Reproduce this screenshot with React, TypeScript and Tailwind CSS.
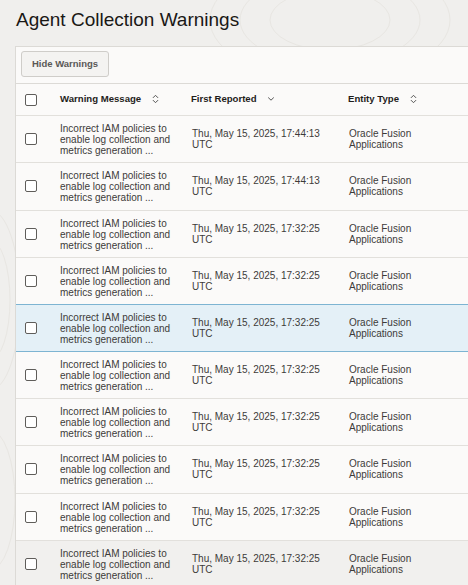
import React from "react";

const rows = [
  { date: "Thu, May 15, 2025, 17:44:13", state: "" },
  { date: "Thu, May 15, 2025, 17:44:13", state: "" },
  { date: "Thu, May 15, 2025, 17:32:25", state: "" },
  { date: "Thu, May 15, 2025, 17:32:25", state: "" },
  { date: "Thu, May 15, 2025, 17:32:25", state: "sel" },
  { date: "Thu, May 15, 2025, 17:32:25", state: "" },
  { date: "Thu, May 15, 2025, 17:32:25", state: "" },
  { date: "Thu, May 15, 2025, 17:32:25", state: "" },
  { date: "Thu, May 15, 2025, 17:32:25", state: "" },
  { date: "Thu, May 15, 2025, 17:32:25", state: "hover" },
];

function Box() {
  return <div className="w-[12px] h-[12px] rounded-[2px] border-[1.5px] border-[#5f5d5a] bg-white" />;
}

function SortBoth() {
  return (
    <svg width="7" height="10" viewBox="0 0 7 10" fill="none" stroke="#555" strokeWidth="1" strokeLinecap="round" strokeLinejoin="round">
      <path d="M1.2 3.6 L3.5 1.3 L5.8 3.6" />
      <path d="M1.2 6.4 L3.5 8.7 L5.8 6.4" />
    </svg>
  );
}

function SortDown() {
  return (
    <svg width="8" height="6" viewBox="0 0 8 6" fill="none" stroke="#555" strokeWidth="1" strokeLinecap="round" strokeLinejoin="round">
      <path d="M1.5 1.8 L4 4.2 L6.5 1.8" />
    </svg>
  );
}

export default function App() {
  return (
    <div
      className="relative w-[468px] h-[585px] overflow-hidden bg-[#f0efed] text-[#161513]"
      style={{ fontFamily: '"Liberation Sans", Arial, sans-serif' }}
    >
      <svg className="absolute inset-0" width="468" height="585" viewBox="0 0 468 585" fill="none" stroke="#e8e6e2" strokeWidth="1">
        <ellipse cx="330" cy="20" rx="60" ry="30" />
        <ellipse cx="330" cy="20" rx="90" ry="45" />
        <ellipse cx="330" cy="20" rx="120" ry="60" />
        <ellipse cx="-10" cy="300" rx="20" ry="60" />
        <ellipse cx="-10" cy="300" rx="30" ry="90" />
        <ellipse cx="-10" cy="500" rx="25" ry="70" />
      </svg>
      <div className="relative flex flex-col">
        <h1 className="pl-[16px] pt-[8px] h-[46px] text-[19px] leading-[24px] font-normal text-[#1a1816]">
          Agent Collection Warnings
        </h1>
        <div className="ml-[15px] w-[470px] border-l border-t border-[#dcdad6] bg-[#fbfaf9]">
          <div className="h-[37px] border-b border-[#dcdad6] flex items-start pt-[4px] pl-[5px]">
            <button className="h-[26px] px-[10px] rounded-[3px] border border-[#cfcdc9] bg-[#f4f3f1] text-[9.5px] font-bold text-[#5a5856]">
              Hide Warnings
            </button>
          </div>
          <div className="h-[32px] border-b border-[#e2e0dc] flex items-center text-[9.6px] font-bold text-[#1f1d1b]">
            <div className="w-[44px] pl-[9px] flex items-center"><Box /></div>
            <div className="w-[131px] flex items-center gap-[11px]">
              <span>Warning Message</span>
              <SortBoth />
            </div>
            <div className="w-[157px] flex items-center gap-[10px]">
              <span>First Reported</span>
              <SortDown />
            </div>
            <div className="flex items-center gap-[11px]">
              <span>Entity Type</span>
              <SortBoth />
            </div>
          </div>
          {rows.map((r, i) => (
            <div
              key={i}
              className={
                "h-[47.33px] flex items-center text-[10px] leading-[11px] text-[#3d3b39] border-b " +
                (r.state === "sel"
                  ? "bg-[#e4f0f7] border-[#7db4d2] border-t -mt-px"
                  : r.state === "hover"
                  ? "bg-[#f1f0ee] border-[#e2e0dc]"
                  : "border-[#e2e0dc]")
              }
            >
              <div className="w-[44px] pl-[9px] flex items-center"><Box /></div>
              <div className="w-[132px] pt-[1px]">
                Incorrect IAM policies to
                <br />
                enable log collection and
                <br />
                metrics generation ...
              </div>
              <div className="w-[157px]">
                {r.date}
                <br />
                UTC
              </div>
              <div>
                Oracle Fusion
                <br />
                Applications
              </div>
            </div>
          ))}
        </div>
      </div>
    </div>
  );
}
